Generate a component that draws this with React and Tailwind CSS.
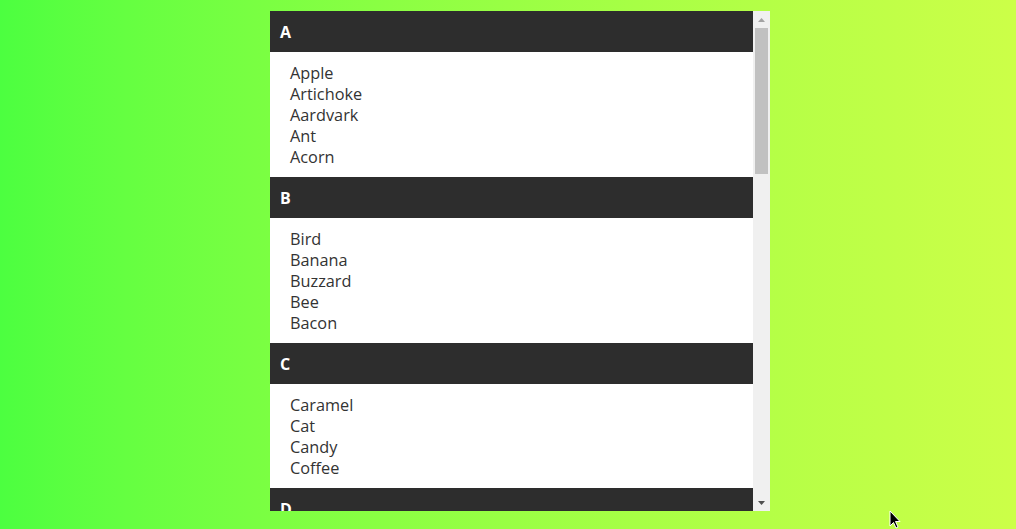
import React from "react";

const groups = [
  { letter: "A", items: ["Apple", "Artichoke", "Aardvark", "Ant", "Acorn"] },
  { letter: "B", items: ["Bird", "Banana", "Buzzard", "Bee", "Bacon"] },
  { letter: "C", items: ["Caramel", "Cat", "Candy", "Coffee"] },
  { letter: "D", items: ["Dog", "Dinosaur", "Duck", "Donut"] },
];

export default function App() {
  return (
    <div
      className="relative w-[1016px] h-[529px] overflow-hidden bg-gradient-to-r from-[#4cff40] to-[#ccff48]"
      style={{ fontFamily: '"Open Sans", "Noto Sans", sans-serif' }}
    >
      <div className="pt-[11px] pl-[270px]">
        <div className="flex w-[500px] h-[500px] bg-white">
          <div className="flex-1 h-full overflow-hidden">
            {groups.map((g) => (
              <div key={g.letter}>
                <div className="h-[41px] bg-[#2d2d2d] px-[10px] flex items-center text-white font-bold text-[16px]">
                  {g.letter}
                </div>
                <div className="pt-[11px] pb-[9px] px-[20px]">
                  {g.items.map((it) => (
                    <div key={it} className="text-[16.3px] leading-[21px] text-[#333333]">
                      {it}
                    </div>
                  ))}
                </div>
              </div>
            ))}
          </div>
          <div className="w-[17px] h-full bg-[#f0f0f0] flex flex-col items-center">
            <div className="h-[17px] w-full flex items-center justify-center">
              <svg width="7" height="4" viewBox="0 0 7 4">
                <polygon points="3.5,0 7,4 0,4" fill="#a3a3a3" />
              </svg>
            </div>
            <div className="w-[13px] h-[146px] bg-[#c1c1c1]" />
            <div className="flex-1" />
            <div className="h-[17px] w-full flex items-center justify-center">
              <svg width="7" height="4" viewBox="0 0 7 4">
                <polygon points="0,0 7,0 3.5,4" fill="#505050" />
              </svg>
            </div>
          </div>
        </div>
      </div>
      <svg
        className="absolute left-[889px] top-[510px]"
        width="12"
        height="19"
        viewBox="0 0 12 19"
      >
        <path d="M1 1 L1 16 L4.5 12.5 L7 18 L9 17 L6.5 11.5 L11 11.5 Z" fill="#000" stroke="#fff" strokeWidth="1" />
      </svg>
    </div>
  );
}
